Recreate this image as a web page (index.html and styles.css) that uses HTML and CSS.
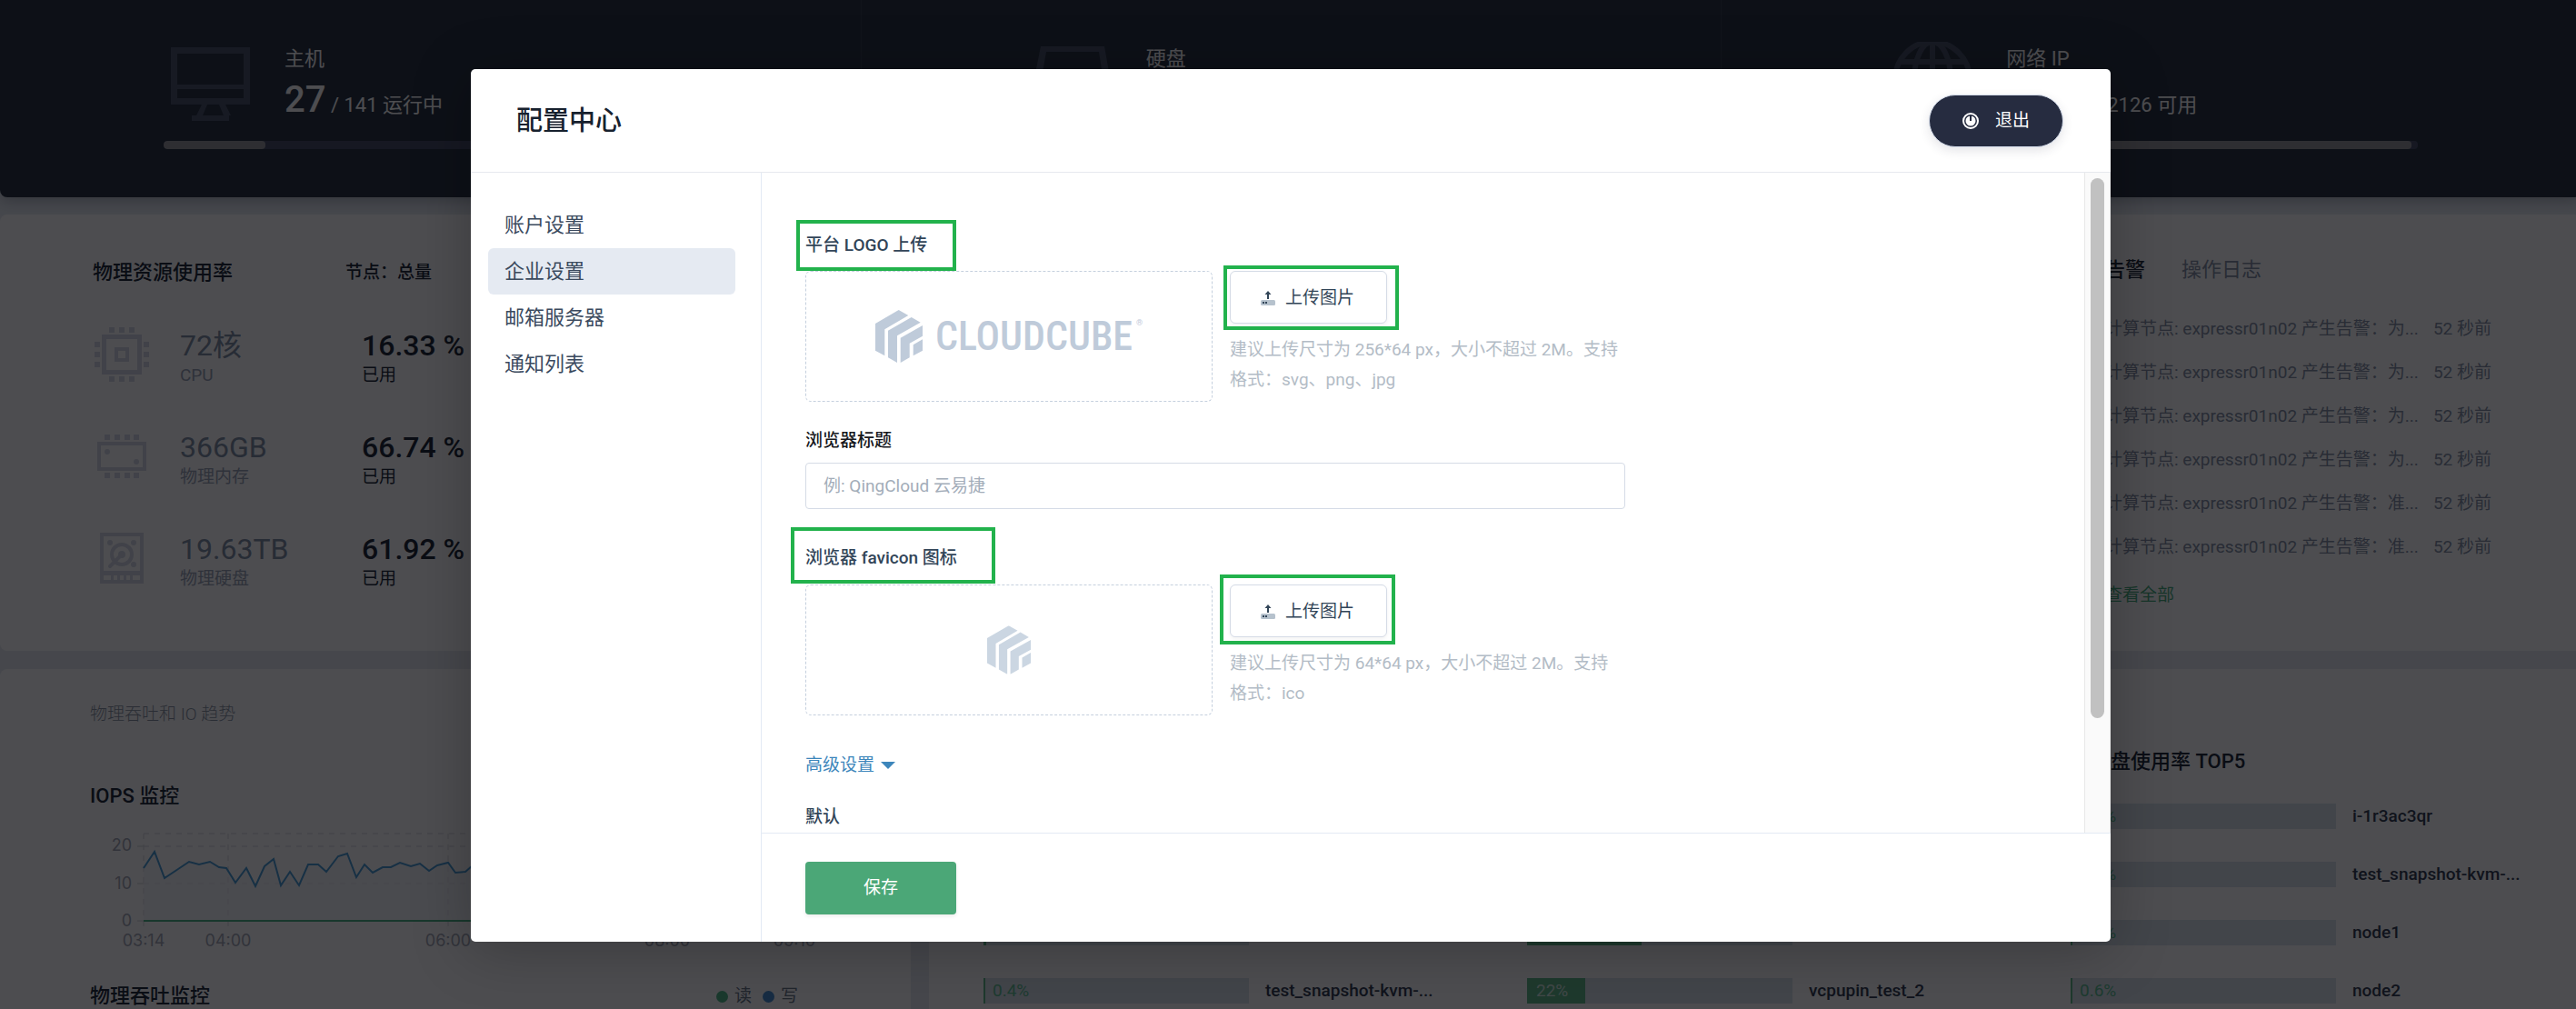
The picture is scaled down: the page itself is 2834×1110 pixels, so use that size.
FILE: index.html
```html
<!DOCTYPE html>
<html lang="zh-CN">
<head>
<meta charset="utf-8">
<title>配置中心</title>
<link rel="stylesheet" href="styles.css">
</head>
<body>
<svg class="defs" aria-hidden="true">
  <symbol id="cube" viewBox="0 0 52 58">
    <path d="M25.7 0 36.3 6 10.3 21.3V50.3L0 44.7V15Z"/>
    <path d="M39.7 8 49.7 13.7 24 28.3V58L14 52.3V22.7Z"/>
    <path d="M52 17V28.7L37.7 36.7V52.3L27.7 58V30.7Z"/>
    <path d="M52 32.3V44.7L41.7 50.3V38.3Z"/>
  </symbol>
  <symbol id="upload" viewBox="0 0 16 16">
    <rect x="0" y="10" width="16" height="6" rx="1.5" fill="#b6c2cd"/>
    <path d="M2 12h2v2H2zM5 12h2v2H5z" fill="#324558"/>
    <path d="M8 0 11.5 4H9V9H7V4H4.500Z" fill="#324558"/>
  </symbol>
</svg>

<div class="page">
  <header class="hero">
    <section class="stat">
      <div class="stat-head">
        <svg class="stat-icon" viewBox="0 0 88 88"><path fill-rule="evenodd" d="M0 6H87V69H60L66 81H64V87H23V81H28L34 69H0ZM7 13V47H80V13ZM7 52V62H80V52ZM40 69 35 81H58L53 69Z"/></svg>
        <div>
          <h2 class="stat-name">主机</h2>
          <p class="stat-value"><b>27</b> / 141 运行中</p>
        </div>
      </div>
      <div class="meter"><div class="meter-fill" style="width:19.1%"></div></div>
    </section>
    <section class="stat">
      <div class="stat-head">
        <svg class="stat-icon" viewBox="0 0 88 88"><path fill-rule="evenodd" d="M9 5H79L87 50V86H0V50ZM15 11 8 50H79L73 11Z"/></svg>
        <div>
          <h2 class="stat-name">硬盘</h2>
        </div>
      </div>
      <div class="meter"></div>
    </section>
    <section class="stat">
      <div class="stat-head">
        <svg class="stat-icon" viewBox="0 0 88 88"><g fill="none" stroke="#4b5469" stroke-width="6"><circle cx="44" cy="41" r="41"/><ellipse cx="44" cy="41" rx="20" ry="41"/><path d="M44 0V82M9 22H79M3 41H85M9 60H79"/></g></svg>
        <div>
          <h2 class="stat-name">网络 IP</h2>
          <p class="stat-value"><b>2100</b> / 2126 可用</p>
        </div>
      </div>
      <div class="meter"><div class="meter-fill" style="width:98.8%"></div></div>
    </section>
  </header>

  <div class="row row-top">
    <section class="panel resources">
      <div class="res-head">
        <h2 class="title">物理资源使用率</h2>
        <p class="node">节点：总量</p>
      </div>
      <div class="res-item">
        <svg class="res-icon" viewBox="0 0 60 60"><path fill-rule="evenodd" d="M8 8H52V52H8ZM13 13V47H47V13ZM22 22H38V38H22ZM26 26V34H34V26Z"/><path d="M16 0h6v6h-6zM27 0h6v6h-6zM38 0h6v6h-6zM16 54h6v6h-6zM27 54h6v6h-6zM38 54h6v6h-6zM0 16h6v6H0zM0 27h6v6H0zM0 38h6v6H0zM54 16h6v6h-6zM54 27h6v6h-6zM54 38h6v6h-6z"/></svg>
        <div><p class="res-total">72核</p><p class="res-name">CPU</p></div>
        <div><p class="res-used">16.33 %</p><p class="res-state">已用</p></div>
      </div>
      <div class="res-item">
        <svg class="res-icon" viewBox="0 0 60 60"><path fill-rule="evenodd" d="M3 14H57V46H3ZM7 18V42H53V18Z"/><circle cx="14" cy="25" r="3"/><circle cx="46" cy="36" r="3"/><path d="M11 6h6v6h-6zM22 6h6v6h-6zM33 6h6v6h-6zM43 6h6v6h-6zM11 48h6v6h-6zM22 48h6v6h-6zM33 48h6v6h-6zM43 48h6v6h-6z"/></svg>
        <div><p class="res-total">366GB</p><p class="res-name">物理内存</p></div>
        <div><p class="res-used">66.74 %</p><p class="res-state">已用</p></div>
      </div>
      <div class="res-item">
        <svg class="res-icon" viewBox="0 0 60 60"><path fill-rule="evenodd" d="M6 2H54V58H6ZM10 6V44H50V6ZM10 49V54H18V49ZM21 49V54H25V49ZM28 49V54H32V49ZM35 49V54H39V49ZM42 49V54H50V49Z"/><circle cx="30" cy="26" r="11" fill="none" stroke="#d5dbe6" stroke-width="4"/><circle cx="30" cy="26" r="4"/><path d="M30 26 17 39" stroke="#d5dbe6" stroke-width="4" stroke-linecap="round"/><circle cx="17" cy="13" r="3"/><circle cx="43" cy="13" r="3"/><circle cx="43" cy="37" r="3"/></svg>
        <div><p class="res-total">19.63TB</p><p class="res-name">物理硬盘</p></div>
        <div><p class="res-used">61.92 %</p><p class="res-state">已用</p></div>
      </div>
    </section>
    <section class="panel alerts">
      <nav class="tabs"><a class="tab tab-on" href="#alerts">告警</a><a class="tab" href="#logs">操作日志</a></nav>
      <ul class="alert-list">
        <li><span>计算节点: expressr01n02 产生告警：为...</span><time>52 秒前</time></li>
        <li><span>计算节点: expressr01n02 产生告警：为...</span><time>52 秒前</time></li>
        <li><span>计算节点: expressr01n02 产生告警：为...</span><time>52 秒前</time></li>
        <li><span>计算节点: expressr01n02 产生告警：为...</span><time>52 秒前</time></li>
        <li><span>计算节点: expressr01n02 产生告警：准...</span><time>52 秒前</time></li>
        <li><span>计算节点: expressr01n02 产生告警：准...</span><time>52 秒前</time></li>
      </ul>
      <a class="more" href="#all">查看全部</a>
    </section>
  </div>

  <div class="row row-bottom">
    <section class="panel trends">
      <p class="trend-intro">物理吞吐和 IO 趋势</p>
      <h2 class="title">IOPS 监控</h2>
      <svg class="chart" viewBox="99 905 903 140" width="903" height="140">
        <g stroke="#d6d8dd" stroke-width="1" stroke-dasharray="6 6" fill="none">
          <path d="M158 917H874M158 931H874M158 972H874M158 917V1020M251 917V1020M493 917V1020M734 917V1020M874 917V1020"/>
        </g>
        <path d="M151 931H158M151 972H158M151 1013H158" stroke="#d0d2d8"/>
        <path class="area" d="M158 955 170 937 181 966 208 948 219 951 231 948 241 954 249 955 259 971 271 955 281 975 291 953 301 945 309 974 319 959 329 974 339 951 350 951 359 959 372 942 382 939 392 965 401 951 410 960 421 954 430 954 440 949 452 953 462 950 472 958 481 952 493 949 501 960 512 959 520 952 874 952V1013H158Z"/>
        <path class="line" d="M158 955 170 937 181 966 208 948 219 951 231 948 241 954 249 955 259 971 271 955 281 975 291 953 301 945 309 974 319 959 329 974 339 951 350 951 359 959 372 942 382 939 392 965 401 951 410 960 421 954 430 954 440 949 452 953 462 950 472 958 481 952 493 949 501 960 512 959 520 952 874 952"/>
        <path d="M158 1013H874" stroke="#4fb488" stroke-width="2"/>
        <g class="axis" text-anchor="end"><text x="145" y="936">20</text><text x="145" y="978">10</text><text x="145" y="1019">0</text></g>
        <g class="axis" text-anchor="middle"><text x="158" y="1041">03:14</text><text x="251" y="1041">04:00</text><text x="493" y="1041">06:00</text><text x="734" y="1041">08:00</text><text x="874" y="1041">09:10</text></g>
      </svg>
      <div class="trend-head">
        <h2 class="title">物理吞吐监控</h2>
        <p class="legend"><i class="dot dot-read"></i>读<i class="dot dot-write"></i>写</p>
      </div>
    </section>
    <section class="panel tops">
      <div class="top-col">
        <h2 class="title">CPU 使用率 TOP5</h2>
        <div class="top-row"><div class="bar"><div class="bar-fill" style="width:2px"></div><span>1%</span></div><p>node1</p></div>
        <div class="top-row"><div class="bar"><div class="bar-fill" style="width:2px"></div><span>0.9%</span></div><p>node2</p></div>
        <div class="top-row"><div class="bar"><div class="bar-fill" style="width:3px"></div><span>0.8%</span></div><p>node3</p></div>
        <div class="top-row"><div class="bar"><div class="bar-fill" style="width:2px"></div><span>0.4%</span></div><p>test_snapshot-kvm-...</p></div>
      </div>
      <div class="top-col">
        <h2 class="title">内存使用率 TOP5</h2>
        <div class="top-row"><div class="bar"><div class="bar-fill" style="width:60%"></div><span class="on">60%</span></div><p>node1</p></div>
        <div class="top-row"><div class="bar"><div class="bar-fill" style="width:50%"></div><span class="on">50%</span></div><p>node2</p></div>
        <div class="top-row"><div class="bar"><div class="bar-fill" style="width:43%"></div><span class="on">43%</span></div><p>node3</p></div>
        <div class="top-row"><div class="bar"><div class="bar-fill" style="width:22%"></div><span class="on">22%</span></div><p>vcpupin_test_2</p></div>
      </div>
      <div class="top-col">
        <h2 class="title">云硬盘使用率 TOP5</h2>
        <div class="top-row"><div class="bar"><div class="bar-fill" style="width:2px"></div><span>0.9%</span></div><p>i-1r3ac3qr</p></div>
        <div class="top-row"><div class="bar"><div class="bar-fill" style="width:2px"></div><span>0.8%</span></div><p>test_snapshot-kvm-...</p></div>
        <div class="top-row"><div class="bar"><div class="bar-fill" style="width:2px"></div><span>0.7%</span></div><p>node1</p></div>
        <div class="top-row"><div class="bar"><div class="bar-fill" style="width:2px"></div><span>0.6%</span></div><p>node2</p></div>
      </div>
    </section>
  </div>

  <div class="overlay">
    <div class="modal" role="dialog" aria-labelledby="modal-title">
      <header class="modal-head">
        <h1 id="modal-title">配置中心</h1>
        <button class="btn btn-exit" type="button">
          <svg viewBox="0 0 18 18" width="18" height="18"><circle cx="9" cy="9" r="8" fill="none" stroke="#fff" stroke-width="2"/><circle cx="9" cy="9" r="5.500" fill="#fff"/><path d="M9 3V9" stroke="#262c40" stroke-width="2"/></svg>
          退出
        </button>
      </header>
      <div class="modal-body">
        <nav class="side">
          <a href="#account">账户设置</a>
          <a href="#company" class="active">企业设置</a>
          <a href="#mail">邮箱服务器</a>
          <a href="#notice">通知列表</a>
        </nav>
        <form class="main">
          <div class="scroller">
            <div class="fields">
              <h3 class="label label-logo"><span class="marked">平台 LOGO 上传<i class="mark mark-logo"></i></span></h3>
              <div class="upload">
                <div class="preview">
                  <svg class="logo-mark" width="52" height="58"><use href="#cube"/></svg>
                  <span class="wordmark">CLOUDCUBE</span><sup class="reg">®</sup>
                </div>
                <div class="upload-side">
                  <button class="btn btn-upload marked" type="button"><svg width="16" height="16"><use href="#upload"/></svg>上传图片<i class="mark mark-btn"></i></button>
                  <p class="hint">建议上传尺寸为 256*64 px，大小不超过 2M。支持格式：svg、png、jpg</p>
                </div>
              </div>
              <label class="label label-title" for="browser-title">浏览器标题</label>
              <input class="text" id="browser-title" type="text" placeholder="例: QingCloud 云易捷">
              <h3 class="label label-icon"><span class="marked">浏览器 favicon 图标<i class="mark mark-icon"></i></span></h3>
              <div class="upload">
                <div class="preview preview-icon">
                  <svg width="48" height="54" viewBox="0 0 52 58"><use href="#cube"/></svg>
                </div>
                <div class="upload-side">
                  <button class="btn btn-upload marked" type="button"><svg width="16" height="16"><use href="#upload"/></svg>上传图片<i class="mark mark-btn2"></i></button>
                  <p class="hint">建议上传尺寸为 64*64 px，大小不超过 2M。支持格式：ico</p>
                </div>
              </div>
              <a class="advanced" href="#advanced">高级设置<svg width="16" height="8"><path d="M0 0H16L8 8Z"/></svg></a>
              <h3 class="label label-default">默认</h3>
            </div>
            <div class="track"><div class="thumb"></div></div>
          </div>
          <footer class="modal-foot"><button class="btn btn-save" type="submit">保存</button></footer>
        </form>
      </div>
    </div>
  </div>
</div>
</body>
</html>
```
FILE: styles.css
```css
* { box-sizing: border-box; margin: 0; padding: 0; }
html, body { height: 100%; overflow: hidden; }
body {
  background: #e6ecf2;
  color: #324558;
  font: 19px/32px Roboto, "Noto Sans CJK SC", sans-serif;
}
a { color: inherit; text-decoration: none; }
ul { list-style: none; }
i { font-style: normal; }
h1, h2, h3 { font-weight: 500; }
.defs { display: none; }

/* The dashboard is a little wider than the window */
.page { position: relative; width: calc(100% + 6px); height: 100%; overflow: hidden; }

.hero {
  display: grid;
  grid-template-columns: repeat(3, 1fr);
  height: 217px;
  background: #283542;
  border-radius: 0 0 8px 8px;
  box-shadow: 0 4px 16px rgba(36, 46, 66, .3);
  color: #fff;
}
.stat { padding: 43px 180px 0; }
.stat + .stat { border-left: 1px solid #36424f; }
.stat-head { display: flex; gap: 37px; height: 112px; padding-left: 8px; }
.stat-icon { width: 88px; height: 88px; margin-top: 3px; fill: #4b5469; flex: none; }
.stat-name { padding-top: 2px; font-size: 22px; font-weight: 400; line-height: 40px; }
.stat-value { font-size: 22px; line-height: 50px; }
.stat-value b { font-size: 40px; font-weight: 500; }
.meter { height: 9px; border-radius: 4px; background: #484f64; overflow: hidden; }
.meter-fill { height: 100%; border-radius: 4px; background: #96969c; }

.row { display: grid; gap: 20px; }
.row-top { grid-template-columns: 1fr 576px; margin-top: 19px; }
.row-bottom { grid-template-columns: 1002px 1fr; margin-top: 20px; }
.panel { background: #fff; border-radius: 8px; }
.title { font-size: 22px; color: #202a38; }

.resources { height: 480px; padding: 48px 102px; }
.res-head { display: grid; grid-template-columns: 278px 1fr; margin-bottom: 44px; }
.node { color: #202a38; font-weight: 500; }
.res-item { display: grid; grid-template-columns: 96px 200px 1fr; margin-bottom: 47px; }
.res-icon { width: 60px; height: 60px; margin-left: 2px; fill: #d5dbe6; }
.res-total, .res-used { font-size: 32px; line-height: 40px; }
.res-total { color: #7f90a6; }
.res-used { color: #202a38; font-weight: 500; }
.res-name, .res-state { padding-top: 1px; line-height: 24px; }
.res-name { color: #99a4b6; }
.res-state { color: #202a38; }

.alerts { padding: 45px 99px 0 52px; color: #8592a6; }
.tabs { display: flex; gap: 40px; margin-bottom: 25px; font-size: 22px; }
.tab-on { color: #202a38; font-weight: 500; }
.alert-list li { display: flex; justify-content: space-between; line-height: 48px; white-space: nowrap; }
.more { display: inline-block; margin-top: 13px; color: #4bb080; }

.trends { padding: 34px 120px 0 99px; }
.trend-intro { color: #8a93a2; font-weight: 300; margin-bottom: 58px; }
.chart { display: block; margin: 13px 0 35px; overflow: visible; }
.axis { font: 18px Inter, sans-serif; fill: #a4a9b6; }
.area { fill: #eef2fa; fill-opacity: .6; }
.line { fill: none; stroke: #4a9fd8; stroke-width: 2; }
.trend-head { display: flex; justify-content: space-between; }
.legend { display: flex; align-items: center; margin-right: 4px; color: #6b7888; }
.dot { width: 13px; height: 13px; border-radius: 50%; margin: 0 7px 0 12px; }
.dot-read { background: #55bc8a; }
.dot-write { background: #4a90d2; }

.tops { display: grid; grid-template-columns: repeat(3, 598px); padding: 86px 0 0 60px; height: 400px; }
.top-col .title { margin-bottom: 30px; }
.top-row { display: flex; gap: 18px; height: 28px; margin-bottom: 36px; line-height: 28px; color: #343f52; font-weight: 500; }
.bar { position: relative; width: 292px; background: #dae3ec; font-weight: 400; color: #5fc293; }
.bar-fill { height: 100%; background: #62bb8a; }
.bar span { position: absolute; left: 10px; top: 0; }
.bar .on { color: #d8efe3; }

.overlay { position: absolute; inset: 0; display: flex; justify-content: center; align-items: flex-start; padding-top: 76px; background: rgba(1, 2, 5, .7); }
.modal {
  display: flex;
  flex-direction: column;
  width: calc(100% - 1036px);
  height: calc(100vh - 150px);
  background: #fff;
  border-radius: 5px;
  overflow: hidden;
  box-shadow: 0 8px 64px rgba(0, 0, 0, .25);
}
.modal-head { display: flex; justify-content: space-between; align-items: center; height: 114px; padding: 0 52px 0 50px; border-bottom: 1px solid #e6e9ee; flex: none; }
.modal-head h1 { font-size: 29px; color: #17212e; }

.btn { display: flex; align-items: center; justify-content: center; height: 58px; border: 0; border-radius: 6px; font: inherit; line-height: 32px; cursor: pointer; }
.btn-exit { gap: 18px; width: 148px; border: 1px solid #d4dcea; border-radius: 29px; background: #262c40; color: #fff; box-shadow: 0 4px 12px rgba(38, 44, 64, .12); }
.btn-save { width: 166px; background: #4ba777; color: #fff; box-shadow: 0 2px 4px rgba(0, 0, 0, .08); border-radius: 4px; }
.btn-upload { gap: 11px; width: 173px; padding: 1px 2px 0 0; background: #fff; border: 1px solid #d5dbe6; color: #324558; box-shadow: 0 2px 4px rgba(0, 0, 0, .05); }

.modal-body { flex: 1; display: flex; min-height: 0; }
.side { width: 320px; padding: 32px 28px 0 19px; border-right: 1px solid #e3eaf4; flex: none; }
.side a { display: block; padding: 0 18px; border-radius: 6px; font-size: 22px; line-height: 51px; color: #3b4a5e; }
.side .active { background: #e5eaf2; }

.main { flex: 1; display: flex; flex-direction: column; min-width: 0; }
.scroller { flex: 1; display: flex; min-height: 0; overflow: hidden; }
.fields { flex: 1; padding: 64px 48px 0; }
.label { display: block; font-size: 19px; font-weight: 500; }
.label-logo { margin-bottom: 12px; }
.label-title { margin: 27px 0 8px; color: #17181c; }
.label-icon { margin: 38px 0 13px; }
.label-default { margin-top: 25px; }
.upload { display: flex; gap: 19px; max-width: 902px; }
.preview { display: flex; align-items: center; justify-content: center; width: 448px; height: 144px; border: 1px dashed #c5d0de; border-radius: 6px; flex: none; fill: #bfcbda; color: #bfcbda; }
.preview-icon { fill: #cbd6e2; }
.wordmark { margin-left: 14px; font: 500 44px/44px "Roboto Condensed", "Liberation Sans Narrow", Roboto, sans-serif; }
.reg { align-self: flex-start; margin: 50px 0 0 4px; font-size: 9px; line-height: 12px; }
.hint { margin-top: 12px; line-height: 33px; color: #b3bcc6; }
.text { display: block; width: 100%; max-width: 902px; height: 51px; padding: 0 19px; border: 1px solid #d5dbe6; border-radius: 4px; font: inherit; color: inherit; }
.text::placeholder { color: #a3adb9; }
.advanced { display: flex; align-items: center; gap: 7px; margin-top: 39px; color: #3d86bb; fill: #3d86bb; }

.marked { position: relative; }
.mark { position: absolute; border: 4px solid #22b24c; pointer-events: none; }
.mark-logo { inset: -16px -32px -17px -10px; }
.mark-icon { inset: -22px -42px -17px -16px; }
.mark-btn { inset: -7px -14px -8px -8px; }
.mark-btn2 { inset: -12px -10px -9px -12px; }

.track { width: 29px; padding: 6px 6px 0; border: 1px solid #e8e8e8; border-width: 0 1px; background: #fafafa; flex: none; }
.thumb { height: 594px; border-radius: 8px; background: #c1c1c1; }
.modal-foot { height: 120px; padding: 31px 48px 0; border-top: 1px solid #e3eaf4; flex: none; }
```
